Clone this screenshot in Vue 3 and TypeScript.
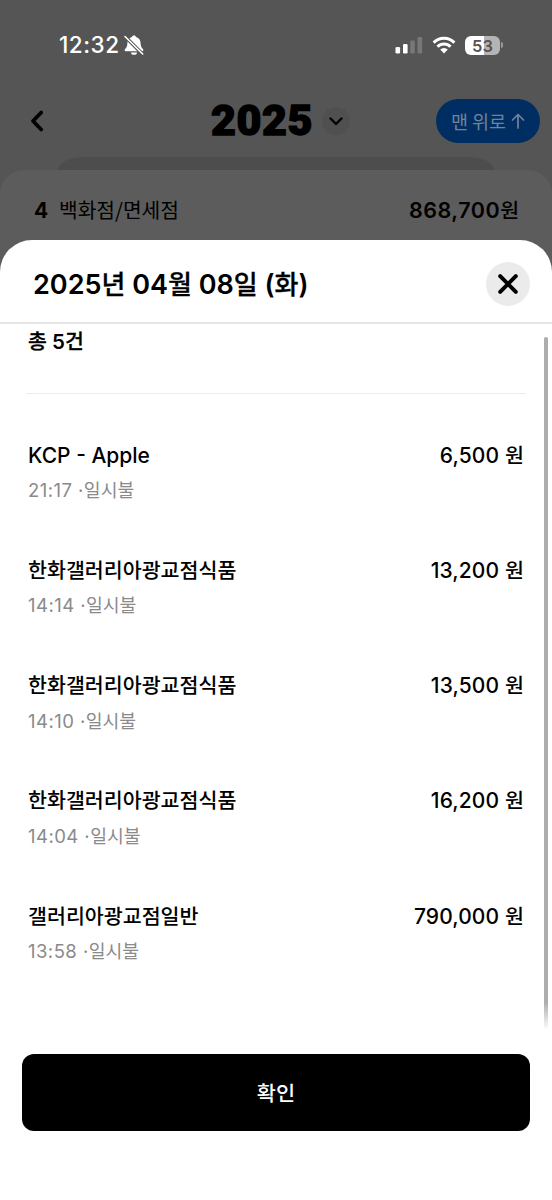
<script setup lang="ts">
interface Run { text: string; ko: boolean }
interface Payment { name: string; time: string; amount: string }

const payments: Payment[] = [
  { name: 'KCP - Apple', time: '21:17', amount: '6,500' },
  { name: '한화갤러리아광교점식품', time: '14:14', amount: '13,200' },
  { name: '한화갤러리아광교점식품', time: '14:10', amount: '13,500' },
  { name: '한화갤러리아광교점식품', time: '14:04', amount: '16,200' },
  { name: '갤러리아광교점일반', time: '13:58', amount: '790,000' },
]

// Splits a string into Hangul and non-Hangul runs so each script gets its own metrics.
const runs = (text: string): Run[] =>
  (text.match(/[가-힣]+|[^가-힣]+/g) ?? []).map((t) => ({ text: t, ko: /[가-힣]/.test(t) }))
</script>

<template>
  <div class="screen">
    <header class="status">
      <div class="clock">
        <span class="time">12:32</span>
        <svg class="bell" width="20" height="20" viewBox="0 0 20 20">
          <path d="M10 .4c-1.100 0-1.900.6-2.100 1.500C5 2.800 3.500 5.200 3.400 8c-.1 3.600-.9 4.500-2.300 6.100-.8.900-.5 2.200.7 2.200h16.400c1.200 0 1.500-1.300.7-2.200-1.400-1.600-2.200-2.500-2.300-6.100C16.500 5.200 15 2.800 12.100 1.900 11.900 1 11.100.4 10 .4zM7 17.400a3 2.300 0 0 0 6 0z" fill="#fff" />
          <path d="M0.500 1 19 19.500" stroke="#555" stroke-width="3.600" />
          <path d="M1 1.500 18.700 19" stroke="#fff" stroke-width="1.600" stroke-linecap="round" />
        </svg>
      </div>
      <div class="signals">
        <svg width="28" height="18" viewBox="0 0 28 18">
          <rect x="0.500" y="11" width="4.600" height="6.500" rx="1.300" fill="#fff" />
          <rect x="8" y="8" width="4.600" height="9.500" rx="1.300" fill="#fff" />
          <rect x="15.200" y="4.500" width="4.600" height="13" rx="1.300" fill="#777" />
          <rect x="22.500" y="1" width="4.600" height="16.500" rx="1.300" fill="#777" />
        </svg>
        <svg class="wifi" width="24" height="18" viewBox="0 0 24 18">
          <g fill="none" stroke="#fff" stroke-width="3">
            <path d="M1.600 6.600a14.800 14.800 0 0 1 20.800 0" />
            <path d="M5.500 10.700a9.200 9.200 0 0 1 13 0" />
          </g>
          <path d="M8.200 13.500a5.400 5.400 0 0 1 7.600 0L12 17.600z" fill="#fff" />
        </svg>
        <div class="battery"><span>53</span></div>
        <i class="nub"></i>
      </div>
    </header>

    <nav class="top">
      <svg class="back" width="16" height="24" viewBox="0 0 16 24">
        <path d="M12.200 3.500 4 12l8.200 8.500" fill="none" stroke="#000" stroke-width="3.800" stroke-linecap="round" stroke-linejoin="round" />
      </svg>
      <div class="year">
        <span class="digits">2025</span>
        <span class="drop">
          <svg width="14" height="10" viewBox="0 0 14 10">
            <path d="M1.500 2.500 7 8 12.500 2.500" fill="none" stroke="#000" stroke-width="2.400" stroke-linecap="round" stroke-linejoin="round" />
          </svg>
        </span>
      </div>
      <button class="to-top">
        <span>맨 위로</span>
        <svg width="14" height="16" viewBox="0 0 14 16">
          <path d="M7 15V1.500M1.500 7 7 1.500 12.500 7" fill="none" stroke="#71839a" stroke-width="1.700" stroke-linecap="round" stroke-linejoin="round" />
        </svg>
      </button>
    </nav>

    <div class="peek"></div>
    <section class="card">
      <span class="rank">4</span>
      <span class="category">백화점/면세점</span>
      <span class="sum"><span v-for="(r, i) in runs('868,700원')" :key="i" :class="{ ko: r.ko }">{{ r.text }}</span></span>
    </section>

    <main class="sheet">
      <div class="sheet-head">
        <h1><span v-for="(r, i) in runs('2025년 04월 08일 (화)')" :key="i" :class="{ ko: r.ko }">{{ r.text }}</span></h1>
        <button class="close" aria-label="닫기">
          <svg width="22" height="22" viewBox="0 0 22 22">
            <path d="M3.200 3.200l15.600 15.600M18.800 3.200 3.200 18.800" stroke="#000" stroke-width="4" stroke-linecap="round" />
          </svg>
        </button>
      </div>
      <div class="body">
        <p class="count"><span v-for="(r, i) in runs('총 5건')" :key="i" :class="{ ko: r.ko }">{{ r.text }}</span></p>
        <ul>
          <li v-for="p in payments" :key="p.time">
            <div class="line">
              <span class="name"><span v-for="(r, i) in runs(p.name)" :key="i" :class="{ ko: r.ko }">{{ r.text }}</span></span>
              <span class="amount">{{ p.amount }} <span class="ko">원</span></span>
            </div>
            <div class="meta">{{ p.time }} ·<span class="ko">일시불</span></div>
          </li>
        </ul>
        <i class="scrollbar"></i>
      </div>
      <button class="confirm">확인</button>
    </main>
  </div>
</template>

<style>
body { margin: 0; }
</style>

<style scoped>
* { box-sizing: border-box; }
.screen {
  position: relative;
  width: 552px;
  height: 1200px;
  overflow: hidden;
  background: #555;
  color: #000;
  font-family: Inter, "Noto Sans CJK KR", sans-serif;
}
button { border: 0; padding: 0; font-family: inherit; }
span { white-space: pre; }
.ko { font-family: "Noto Sans CJK KR", sans-serif; line-height: 1; }

.status {
  height: 90px;
  padding: 0 49px 0 59px;
  display: flex;
  align-items: center;
  justify-content: space-between;
}
.clock { display: flex; align-items: center; color: #fff; }
.time { width: 65px; font-size: 22.500px; line-height: 28px; font-weight: 550; letter-spacing: 0.500px; }
.signals { display: flex; align-items: center; }
.wifi { margin-left: 9px; }
.battery {
  width: 35px;
  height: 19px;
  margin-left: 9px;
  border-radius: 6px;
  background: linear-gradient(90deg, #fff 53%, #b4b4b4 53%);
  color: #555;
  text-align: center;
  font-size: 16.500px;
  line-height: 20px;
  font-weight: 600;
}
.nub { width: 2px; height: 6px; margin-left: 1px; border-radius: 0 2px 2px 0; background: #999; }

.top {
  height: 67px;
  padding: 0 12px 5px 29px;
  display: flex;
  align-items: center;
  justify-content: space-between;
}
.year { display: flex; align-items: center; margin-left: 80px; }
.digits {
  width: 111px;
  font-family: Roboto, sans-serif;
  font-size: 43px;
  line-height: 48px;
  padding-bottom: 2px;
  font-weight: 900;
  letter-spacing: 0.600px;
  -webkit-text-stroke: 1.400px #000;
}
.drop {
  width: 28px;
  height: 28px;
  border-radius: 50%;
  background: #505050;
  display: flex;
  align-items: center;
  justify-content: center;
}
.to-top {
  width: 104px;
  height: 44px;
  border-radius: 22px;
  background: #002e63;
  color: #71839a;
  display: flex;
  align-items: center;
  justify-content: center;
  gap: 5px;
  font: 400 18.500px/26px "Noto Sans CJK KR", sans-serif;
}

.peek { height: 13px; margin: 0 58px; border-radius: 26px 26px 0 0 / 13px 13px 0 0; background: #4d4d4d; }
.card {
  height: 200px;
  padding: 24px 33px 0 34px;
  border-radius: 24px 24px 0 0;
  background: #5c5c5c;
  display: flex;
  align-items: flex-start;
  line-height: 33px;
}
.rank { width: 25px; font-size: 21px; font-weight: 700; }
.category { font: 400 20.300px/31px "Noto Sans CJK KR", sans-serif; flex: 1; }
.sum { font-size: 21.500px; font-weight: 600; letter-spacing: 0.500px; }
.sum .ko { font-size: 20.500px; font-weight: 500; letter-spacing: 0; }

.sheet {
  position: absolute;
  left: 0;
  top: 240px;
  width: 552px;
  height: 960px;
  border-radius: 32px 32px 0 0;
  background: #fff;
  display: flex;
  flex-direction: column;
}
.sheet-head {
  height: 84px;
  flex: none;
  padding: 6px 22px 0 33px;
  border-bottom: 2px solid #e5e5e5;
  display: flex;
  align-items: center;
  justify-content: space-between;
}
h1 { margin: 0; padding-top: 2px; font-size: 27px; line-height: 40px; font-weight: 600; letter-spacing: 0; }
h1 .ko { font-size: 26px; font-weight: 500; -webkit-text-stroke: 0.300px #000; }
.close {
  width: 44px;
  height: 44px;
  border-radius: 50%;
  background: #ebebeb;
  display: flex;
  align-items: center;
  justify-content: center;
}
.body { position: relative; height: 730px; flex: none; padding: 0 26px; }
.count {
  height: 70px;
  margin: 0;
  padding: 3px 2px 0;
  border-bottom: 1px solid #ededed;
  font-size: 20.500px;
  line-height: 30px;
  font-weight: 600;
}
.count .ko { font-size: 20.500px; font-weight: 500; -webkit-text-stroke: 0.300px #000; }
ul { margin: 0; padding: 45.500px 2px 0; list-style: none; }
li { height: 115.250px; }
.line { display: flex; justify-content: space-between; height: 32px; font-size: 21px; line-height: 32px; font-weight: 500; }
.line .ko { font-size: 20.600px; }
.amount { letter-spacing: 0.120px; }
.meta { margin-top: 3.500px; font-size: 18.500px; line-height: 30px; letter-spacing: 0.450px; color: #8a8a8a; }
.meta .ko { font-size: 18.300px; letter-spacing: 0; }
.scrollbar {
  position: absolute;
  right: 4px;
  top: 13px;
  width: 4.500px;
  height: 693px;
  border-radius: 3px;
  background: linear-gradient(#adadad 96%, #fff);
}
.confirm {
  width: 508px;
  height: 77px;
  margin-left: 22px;
  padding-bottom: 2px;
  border-radius: 12px;
  background: #000;
  color: #fff;
  font: 500 20.800px/30px "Noto Sans CJK KR", sans-serif;
}
</style>
